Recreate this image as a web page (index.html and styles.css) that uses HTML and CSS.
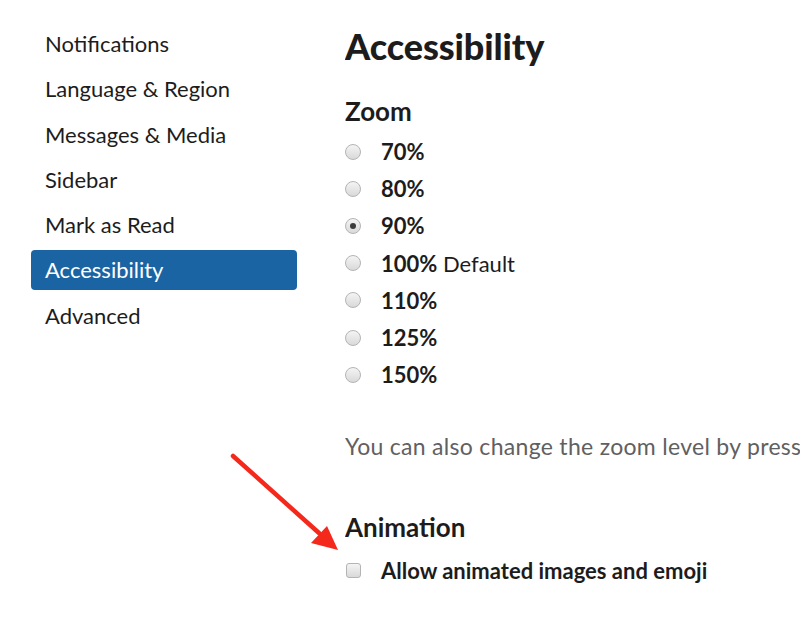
FILE: index.html
```html
<!DOCTYPE html>
<html>
<head>
<meta charset="utf-8">
<link rel="stylesheet" href="styles.css">
</head>
<body>
<div class="page">
  <nav class="sidebar">
    <div class="nav-item">Notifications</div>
    <div class="nav-item">Language &amp; Region</div>
    <div class="nav-item">Messages &amp; Media</div>
    <div class="nav-item">Sidebar</div>
    <div class="nav-item">Mark as Read</div>
    <div class="nav-item active">Accessibility</div>
    <div class="nav-item">Advanced</div>
  </nav>
  <main class="content">
    <h1 class="title">Accessibility</h1>
    <h2 class="section">Zoom</h2>
    <div class="options">
      <label class="opt"><span class="radio"></span><b>70%</b></label>
      <label class="opt"><span class="radio"></span><b>80%</b></label>
      <label class="opt"><span class="radio checked"></span><b>90%</b></label>
      <label class="opt"><span class="radio"></span><b>100%</b>&nbsp;<span class="plain">Default</span></label>
      <label class="opt"><span class="radio"></span><b>110%</b></label>
      <label class="opt"><span class="radio"></span><b>125%</b></label>
      <label class="opt"><span class="radio"></span><b>150%</b></label>
    </div>
    <p class="hint">You can also change the zoom level by pressing Ctrl and + or − keys.</p>
    <h2 class="section anim">Animation</h2>
    <label class="opt check-row"><span class="checkbox"></span><b>Allow animated images and emoji</b></label>
  </main>
</div>
<svg class="arrow" width="130" height="110" viewBox="0 0 130 110">
  <line x1="9" y1="9" x2="95" y2="86" stroke="#f5281c" stroke-width="4.5" stroke-linecap="round"/>
  <polygon points="114,103 87,96 103,79" fill="#f5281c"/>
</svg>
</body>
</html>
```

FILE: styles.css
```css
html, body {
  margin: 0;
  padding: 0;
  background: #ffffff;
  overflow: hidden;
}
body {
  font-family: Lato, "Open Sans", sans-serif;
  color: #1d1c1d;
  width: 800px;
  height: 626px;
  position: relative;
}
.page {
  display: flex;
  padding-top: 24px;
}
.sidebar {
  width: 266px;
  margin-left: 31px;
  display: flex;
  flex-direction: column;
  gap: 5.3px;
}
.nav-item {
  height: 40px;
  line-height: 40px;
  padding-left: 14px;
  font-size: 22px;
  color: #1d1c1d;
  border-radius: 4px;
  white-space: nowrap;
}
.nav-item.active {
  background: #1b64a3;
  color: #ffffff;
}
.content {
  margin-left: 48px;
  margin-top: -1px;
  flex: 1;
  min-width: 0;
  white-space: nowrap;
  overflow: hidden;
}
.title {
  margin: 0;
  font-size: 36px;
  font-weight: 900;
  line-height: 46px;
  letter-spacing: -0.1px;
}
.section {
  margin: 0;
  font-size: 26px;
  font-weight: 700;
  line-height: 30px;
}
.title + .section {
  margin-top: 27px;
}
.options {
  display: flex;
  flex-direction: column;
  margin-top: 7px;
}
.opt {
  display: flex;
  align-items: center;
  height: 37.2px;
  font-size: 22px;
}
.opt b {
  font-weight: 700;
}
.plain {
  font-weight: 400;
}
.radio {
  width: 14px;
  height: 14px;
  border-radius: 50%;
  border: 1px solid #b4b4b4;
  background: linear-gradient(#f4f4f4, #d9d9d9);
  margin-left: 0;
  margin-right: 20px;
  box-sizing: content-box;
  display: flex;
  align-items: center;
  justify-content: center;
  flex: none;
}
.radio.checked::after {
  content: "";
  width: 6px;
  height: 6px;
  border-radius: 50%;
  background: #3c3c3c;
}
.hint {
  margin: 38px 0 0 0;
  font-size: 23px;
  letter-spacing: 0.3px;
  color: #616061;
  line-height: 30px;
}
.section.anim {
  margin-top: 51px;
}
.check-row {
  margin-top: 10px;
}
.checkbox {
  width: 13px;
  height: 13px;
  border-radius: 3px;
  border: 1px solid #b4b4b4;
  background: linear-gradient(#f4f4f4, #d9d9d9);
  margin-left: 1px;
  margin-right: 20px;
  flex: none;
}
.arrow {
  position: absolute;
  left: 224px;
  top: 447px;
}
```
